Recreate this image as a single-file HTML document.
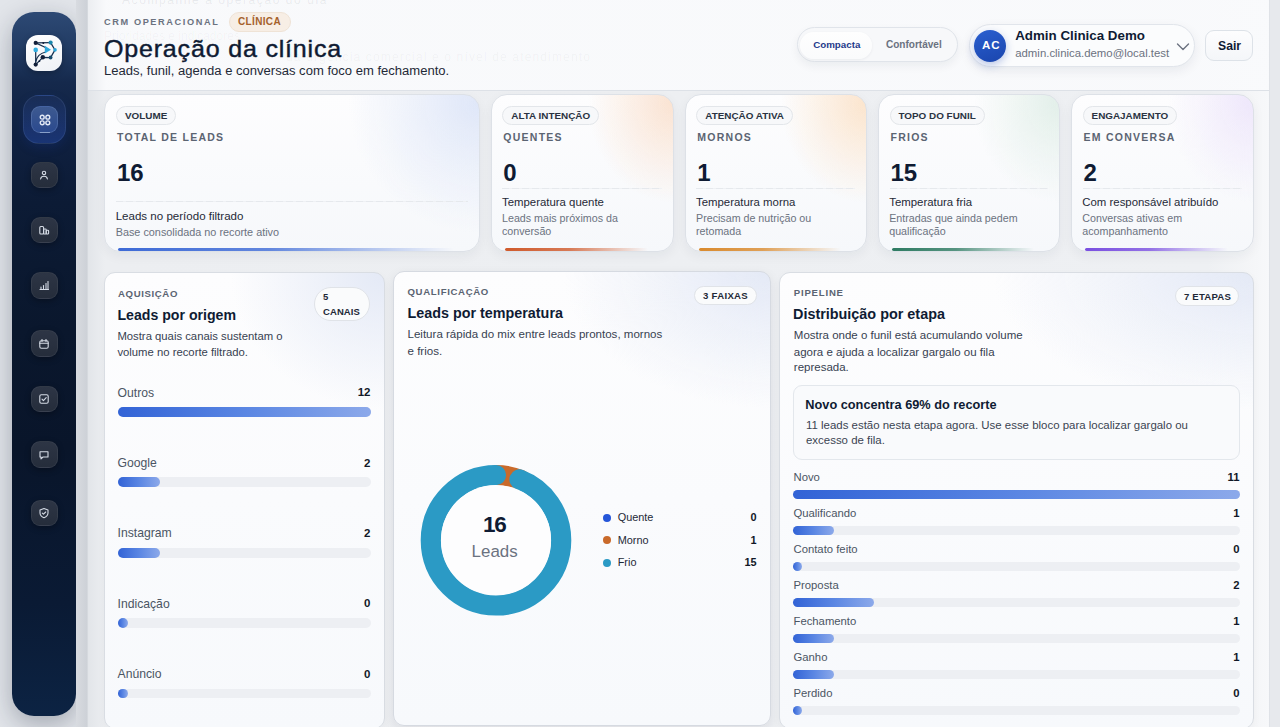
<!DOCTYPE html>
<html><head><meta charset="utf-8">
<style>
*{box-sizing:border-box;margin:0;padding:0}
html,body{width:1280px;height:727px;overflow:hidden}
body{font-family:"Liberation Sans",sans-serif;background:#e2e5ea;position:relative;color:#0f1b33}
.abs{position:absolute}
.t{position:absolute;white-space:nowrap;line-height:1}
</style></head><body>
<div class="abs" style="left:12.00px;top:12.00px;width:64.00px;height:704.00px;border-radius:22px;background:linear-gradient(180deg,#2d4974 0%,#223c64 5%,#15294c 10%,#0f2040 18%,#0c1b35 27%,#0a172d 45%,#09152a 62%,#0a1a34 84%,#0c2343 100%);box-shadow:0 8px 26px rgba(15,25,45,.30)"></div>
<div class="abs" style="left:26.00px;top:35.00px;width:36.00px;height:36.00px;border-radius:12px;background:linear-gradient(160deg,#ffffff,#eef1f6);box-shadow:0 2px 6px rgba(0,0,0,.25)"></div>
<svg class="abs" style="left:25px;top:34px" width="38" height="38" viewBox="0 0 38 38">
<g stroke="#17304f" stroke-width="1.25" fill="none" stroke-linecap="round">
<path d="M10.7 8.9 L25.6 8.6"/>
<path d="M10.7 8.9 L20.5 13.5"/>
<path d="M25.6 8.6 L30 15.9 L25.6 23.5 L17.8 23.3 L10.7 30.6"/>
<path d="M10.7 15.9 L10.7 30.6"/>
<path d="M11 27 Q12.5 20 20.5 18"/>
</g>
<path d="M19.8 11.8 L26 15.8 L19.8 19.6 Z" fill="#2ca6da"/>
<circle cx="10.7" cy="8.9" r="2.1" fill="#111f3a"/>
<circle cx="18.3" cy="8.9" r="1" fill="#111f3a"/>
<circle cx="25.6" cy="8.6" r="2.1" fill="#1b87ad"/>
<circle cx="10.7" cy="15.9" r="2.3" fill="#33aee0"/>
<circle cx="30" cy="15.9" r="1.8" fill="#2aa4d8"/>
<circle cx="17.8" cy="23.3" r="2.2" fill="#111f3a"/>
<circle cx="25.6" cy="23.5" r="1.9" fill="#15496b"/>
<circle cx="14.4" cy="27.2" r="0.9" fill="#111f3a"/>
<circle cx="10.7" cy="30.6" r="2.1" fill="#111f3a"/>
</svg>
<div class="abs" style="left:23.40px;top:95.00px;width:42.50px;height:48.60px;border-radius:16px;background:linear-gradient(180deg,rgba(30,50,95,.6),rgba(35,70,160,.55));border:1px solid rgba(150,175,225,.13);box-shadow:0 4px 10px rgba(20,50,140,.25)"></div>
<div class="abs" style="left:31.00px;top:106.00px;width:26.50px;height:26.50px;border-radius:9px;background:linear-gradient(180deg,#3d5990,#2b4a8e);border:1px solid rgba(160,185,230,.22)"></div>
<svg class="abs" style="left:39px;top:114px" width="12" height="12" viewBox="0 0 12 12" fill="none" stroke="#e3eaf7" stroke-width="1.4">
<circle cx="3.2" cy="3.2" r="1.95"/><circle cx="8.8" cy="3.2" r="1.95"/><circle cx="3.2" cy="8.8" r="1.95"/><circle cx="8.8" cy="8.8" r="1.95"/></svg>
<div class="abs" style="left:40.00px;top:131.50px;width:10.00px;height:1.00px;background:rgba(190,210,240,.5)"></div>
<div class="abs" style="left:31.00px;top:161.55px;width:26.50px;height:26.50px;border-radius:9px;background:linear-gradient(180deg,#2d3545,#252d3b);border:1px solid rgba(255,255,255,.06);box-shadow:0 2px 6px rgba(0,0,0,.3)"></div>
<svg class="abs" style="left:38.25px;top:168.80px" width="12" height="12" viewBox="0 0 12 12" fill="none" stroke="#d5dbe5" stroke-width="1.1" stroke-linecap="round" stroke-linejoin="round"><circle cx="6" cy="3.9" r="1.7"/><path d="M2.6 10 Q3 7.3 6 7.3 Q9 7.3 9.4 10"/></svg>
<div class="abs" style="left:31.00px;top:216.55px;width:26.50px;height:26.50px;border-radius:9px;background:linear-gradient(180deg,#2d3545,#252d3b);border:1px solid rgba(255,255,255,.06);box-shadow:0 2px 6px rgba(0,0,0,.3)"></div>
<svg class="abs" style="left:38.25px;top:223.80px" width="12" height="12" viewBox="0 0 12 12" fill="none" stroke="#d5dbe5" stroke-width="1.1" stroke-linecap="round" stroke-linejoin="round"><rect x="1.8" y="2.5" width="3.8" height="7.5" rx="1"/><rect x="5.6" y="5" width="2.6" height="5" rx=".8"/><rect x="8.2" y="6.2" width="2.4" height="3.8" rx=".8"/></svg>
<div class="abs" style="left:31.00px;top:272.15px;width:26.50px;height:26.50px;border-radius:9px;background:linear-gradient(180deg,#2d3545,#252d3b);border:1px solid rgba(255,255,255,.06);box-shadow:0 2px 6px rgba(0,0,0,.3)"></div>
<svg class="abs" style="left:38.25px;top:279.40px" width="12" height="12" viewBox="0 0 12 12" fill="none" stroke="#d5dbe5" stroke-width="1.1" stroke-linecap="round" stroke-linejoin="round"><path d="M2 10.5 H10.5"/><path d="M3 10 V8"/><path d="M5.5 10 V6.5"/><path d="M8 10 V4.5"/><path d="M10 10 V2.5"/></svg>
<div class="abs" style="left:31.00px;top:330.25px;width:26.50px;height:26.50px;border-radius:9px;background:linear-gradient(180deg,#2d3545,#252d3b);border:1px solid rgba(255,255,255,.06);box-shadow:0 2px 6px rgba(0,0,0,.3)"></div>
<svg class="abs" style="left:38.25px;top:337.50px" width="12" height="12" viewBox="0 0 12 12" fill="none" stroke="#d5dbe5" stroke-width="1.1" stroke-linecap="round" stroke-linejoin="round"><rect x="1.8" y="2.8" width="8.4" height="7.4" rx="1.5"/><path d="M1.8 5.3 H10.2"/><path d="M4 1.5 V3.5"/><path d="M8 1.5 V3.5"/></svg>
<div class="abs" style="left:31.00px;top:385.95px;width:26.50px;height:26.50px;border-radius:9px;background:linear-gradient(180deg,#2d3545,#252d3b);border:1px solid rgba(255,255,255,.06);box-shadow:0 2px 6px rgba(0,0,0,.3)"></div>
<svg class="abs" style="left:38.25px;top:393.20px" width="12" height="12" viewBox="0 0 12 12" fill="none" stroke="#d5dbe5" stroke-width="1.1" stroke-linecap="round" stroke-linejoin="round"><rect x="1.8" y="1.8" width="8.4" height="8.4" rx="1.5"/><path d="M4 6.2 L5.4 7.6 L8.2 4.6"/></svg>
<div class="abs" style="left:31.00px;top:441.25px;width:26.50px;height:26.50px;border-radius:9px;background:linear-gradient(180deg,#2d3545,#252d3b);border:1px solid rgba(255,255,255,.06);box-shadow:0 2px 6px rgba(0,0,0,.3)"></div>
<svg class="abs" style="left:38.25px;top:448.50px" width="12" height="12" viewBox="0 0 12 12" fill="none" stroke="#d5dbe5" stroke-width="1.1" stroke-linecap="round" stroke-linejoin="round"><path d="M2 2.8 H10 V8 H5 L3 9.8 V8 H2 Z"/></svg>
<div class="abs" style="left:31.00px;top:499.75px;width:26.50px;height:26.50px;border-radius:9px;background:linear-gradient(180deg,#2d3545,#252d3b);border:1px solid rgba(255,255,255,.06);box-shadow:0 2px 6px rgba(0,0,0,.3)"></div>
<svg class="abs" style="left:38.25px;top:507.00px" width="12" height="12" viewBox="0 0 12 12" fill="none" stroke="#d5dbe5" stroke-width="1.1" stroke-linecap="round" stroke-linejoin="round"><path d="M6 1.5 L10 3 V6 Q10 9 6 10.8 Q2 9 2 6 V3 Z"/><path d="M4.3 6.1 L5.5 7.2 L7.7 5"/></svg>
<div class="abs" style="left:76.00px;top:0.00px;width:11.00px;height:727.00px;background:linear-gradient(90deg,#d8dbe0,#cdd1d7)"></div>
<div class="abs" style="left:87.00px;top:0.00px;width:1182.00px;height:727.00px;background:linear-gradient(90deg,#e2e5e9 0,#eceef1 17px,#eef0f3 1120px,#f5f6f8 1166px,#f7f8fa 1182px);border-left:1px solid #d5d9de"></div>
<div class="abs" style="left:1269.00px;top:0.00px;width:11.00px;height:727.00px;background:#e7e9ed;border-left:1px solid #dfe2e7"></div>
<div class="abs" style="left:104.20px;top:94.00px;width:375.80px;height:158.30px;border-radius:16px;border:1px solid #dde1e7;background:radial-gradient(ellipse 130px 130px at 100% 5%,rgba(218,227,247,.85),rgba(255,255,255,0) 100%),linear-gradient(180deg,#fdfdfe,#f6f8fb);box-shadow:0 4px 12px rgba(20,30,50,.05);overflow:hidden"><div class="abs" style="left:13px;bottom:0;width:335.8px;height:3px;border-radius:2px;background:linear-gradient(90deg,#3d6ad6,#3d6ad6cc 45%,#3d6ad600)"></div></div>
<div class="abs" style="left:116.00px;top:106.00px;width:60.35px;height:18.50px;border-radius:10px;background:#f7f8fa;border:1px solid #e3e6ea"></div>
<div class="t" style="left:125.00px;top:110.92px;font-size:9.9px;color:#2a3342;font-weight:700;">VOLUME</div>
<div class="t" style="left:117.00px;top:132.41px;font-size:10.5px;color:#5b6472;font-weight:700;letter-spacing:1.250px;">TOTAL DE LEADS</div>
<div class="t" style="left:117.00px;top:160.68px;font-size:24px;color:#0f1b33;font-weight:700;">16</div>
<div class="abs" style="left:116.00px;top:201.00px;width:352.00px;height:1.00px;background:repeating-linear-gradient(90deg,#e6e9ed 0 7px,#eff1f4 7px 10px)"></div>
<div class="t" style="left:115.70px;top:210.62px;font-size:11.55px;color:#1f2937;">Leads no período filtrado</div>
<div class="t" style="left:115.70px;top:226.72px;font-size:10.85px;color:#6b7280;">Base consolidada no recorte ativo</div>
<div class="abs" style="left:490.50px;top:94.00px;width:183.50px;height:158.30px;border-radius:16px;border:1px solid #dde1e7;background:radial-gradient(ellipse 85px 100px at 100% 5%,rgba(250,224,205,.9),rgba(255,255,255,0) 100%),linear-gradient(180deg,#fdfdfe,#f6f8fb);box-shadow:0 4px 12px rgba(20,30,50,.05);overflow:hidden"><div class="abs" style="left:13px;bottom:0;width:143.5px;height:3px;border-radius:2px;background:linear-gradient(90deg,#cf5a2c,#cf5a2ccc 45%,#cf5a2c00)"></div></div>
<div class="abs" style="left:502.30px;top:106.00px;width:97.01px;height:18.50px;border-radius:10px;background:#f7f8fa;border:1px solid #e3e6ea"></div>
<div class="t" style="left:511.30px;top:110.92px;font-size:9.9px;color:#2a3342;font-weight:700;">ALTA INTENÇÃO</div>
<div class="t" style="left:503.30px;top:132.41px;font-size:10.5px;color:#5b6472;font-weight:700;letter-spacing:1.250px;">QUENTES</div>
<div class="t" style="left:503.30px;top:160.68px;font-size:24px;color:#0f1b33;font-weight:700;">0</div>
<div class="abs" style="left:502.30px;top:188.00px;width:159.70px;height:1.00px;background:repeating-linear-gradient(90deg,#e6e9ed 0 7px,#eff1f4 7px 10px)"></div>
<div class="t" style="left:502.00px;top:196.85px;font-size:11.4px;color:#1f2937;">Temperatura quente</div>
<div class="t" style="left:502.00px;top:212.94px;font-size:10.7px;color:#6b7280;">Leads mais próximos da</div>
<div class="t" style="left:502.00px;top:225.94px;font-size:10.7px;color:#6b7280;">conversão</div>
<div class="abs" style="left:684.50px;top:94.00px;width:182.50px;height:158.30px;border-radius:16px;border:1px solid #dde1e7;background:radial-gradient(ellipse 85px 100px at 100% 5%,rgba(251,226,200,.9),rgba(255,255,255,0) 100%),linear-gradient(180deg,#fdfdfe,#f6f8fb);box-shadow:0 4px 12px rgba(20,30,50,.05);overflow:hidden"><div class="abs" style="left:13px;bottom:0;width:142.5px;height:3px;border-radius:2px;background:linear-gradient(90deg,#d98a2e,#d98a2ecc 45%,#d98a2e00)"></div></div>
<div class="abs" style="left:696.30px;top:106.00px;width:96.83px;height:18.50px;border-radius:10px;background:#f7f8fa;border:1px solid #e3e6ea"></div>
<div class="t" style="left:705.30px;top:110.92px;font-size:9.9px;color:#2a3342;font-weight:700;">ATENÇÃO ATIVA</div>
<div class="t" style="left:697.30px;top:132.41px;font-size:10.5px;color:#5b6472;font-weight:700;letter-spacing:1.250px;">MORNOS</div>
<div class="t" style="left:697.30px;top:160.68px;font-size:24px;color:#0f1b33;font-weight:700;">1</div>
<div class="abs" style="left:696.30px;top:188.00px;width:158.70px;height:1.00px;background:repeating-linear-gradient(90deg,#e6e9ed 0 7px,#eff1f4 7px 10px)"></div>
<div class="t" style="left:696.00px;top:196.85px;font-size:11.4px;color:#1f2937;">Temperatura morna</div>
<div class="t" style="left:696.00px;top:212.94px;font-size:10.7px;color:#6b7280;">Precisam de nutrição ou</div>
<div class="t" style="left:696.00px;top:225.94px;font-size:10.7px;color:#6b7280;">retomada</div>
<div class="abs" style="left:877.70px;top:94.00px;width:182.40px;height:158.30px;border-radius:16px;border:1px solid #dde1e7;background:radial-gradient(ellipse 85px 100px at 100% 5%,rgba(220,236,228,.8),rgba(255,255,255,0) 100%),linear-gradient(180deg,#fdfdfe,#f6f8fb);box-shadow:0 4px 12px rgba(20,30,50,.05);overflow:hidden"><div class="abs" style="left:13px;bottom:0;width:142.4px;height:3px;border-radius:2px;background:linear-gradient(90deg,#2e7b62,#2e7b62cc 45%,#2e7b6200)"></div></div>
<div class="abs" style="left:889.50px;top:106.00px;width:95.37px;height:18.50px;border-radius:10px;background:#f7f8fa;border:1px solid #e3e6ea"></div>
<div class="t" style="left:898.50px;top:110.92px;font-size:9.9px;color:#2a3342;font-weight:700;">TOPO DO FUNIL</div>
<div class="t" style="left:890.50px;top:132.41px;font-size:10.5px;color:#5b6472;font-weight:700;letter-spacing:1.250px;">FRIOS</div>
<div class="t" style="left:890.50px;top:160.68px;font-size:24px;color:#0f1b33;font-weight:700;">15</div>
<div class="abs" style="left:889.50px;top:188.00px;width:158.60px;height:1.00px;background:repeating-linear-gradient(90deg,#e6e9ed 0 7px,#eff1f4 7px 10px)"></div>
<div class="t" style="left:889.20px;top:196.85px;font-size:11.4px;color:#1f2937;">Temperatura fria</div>
<div class="t" style="left:889.20px;top:212.94px;font-size:10.7px;color:#6b7280;">Entradas que ainda pedem</div>
<div class="t" style="left:889.20px;top:225.94px;font-size:10.7px;color:#6b7280;">qualificação</div>
<div class="abs" style="left:1070.80px;top:94.00px;width:183.60px;height:158.30px;border-radius:16px;border:1px solid #dde1e7;background:radial-gradient(ellipse 85px 100px at 100% 5%,rgba(235,226,250,.8),rgba(255,255,255,0) 100%),linear-gradient(180deg,#fdfdfe,#f6f8fb);box-shadow:0 4px 12px rgba(20,30,50,.05);overflow:hidden"><div class="abs" style="left:13px;bottom:0;width:143.6px;height:3px;border-radius:2px;background:linear-gradient(90deg,#7a4fe0,#7a4fe0cc 45%,#7a4fe000)"></div></div>
<div class="abs" style="left:1082.60px;top:106.00px;width:94.83px;height:18.50px;border-radius:10px;background:#f7f8fa;border:1px solid #e3e6ea"></div>
<div class="t" style="left:1091.60px;top:110.92px;font-size:9.9px;color:#2a3342;font-weight:700;">ENGAJAMENTO</div>
<div class="t" style="left:1083.60px;top:132.41px;font-size:10.5px;color:#5b6472;font-weight:700;letter-spacing:1.250px;">EM CONVERSA</div>
<div class="t" style="left:1083.60px;top:160.68px;font-size:24px;color:#0f1b33;font-weight:700;">2</div>
<div class="abs" style="left:1082.60px;top:188.00px;width:159.80px;height:1.00px;background:repeating-linear-gradient(90deg,#e6e9ed 0 7px,#eff1f4 7px 10px)"></div>
<div class="t" style="left:1082.30px;top:196.85px;font-size:11.4px;color:#1f2937;">Com responsável atribuído</div>
<div class="t" style="left:1082.30px;top:212.94px;font-size:10.7px;color:#6b7280;">Conversas ativas em</div>
<div class="t" style="left:1082.30px;top:225.94px;font-size:10.7px;color:#6b7280;">acompanhamento</div>
<div class="abs" style="left:104.20px;top:272.00px;width:280.80px;height:457.00px;border-radius:11px;border:1px solid #d9dde3;background:radial-gradient(ellipse 55% 30% at 100% 0%,rgba(225,231,245,.9),rgba(255,255,255,0)),linear-gradient(180deg,#fdfdfe 0%,#f7f9fc 100%);box-shadow:0 3px 8px rgba(20,30,50,.035);"></div>
<div class="abs" style="left:393.00px;top:270.50px;width:378.00px;height:455.50px;border-radius:11px;border:1px solid #d9dde3;background:radial-gradient(ellipse 55% 30% at 100% 0%,rgba(225,231,245,.9),rgba(255,255,255,0)),linear-gradient(180deg,#fdfdfe 0%,#f7f9fc 100%);box-shadow:0 3px 8px rgba(20,30,50,.035);box-shadow:0 4px 12px rgba(20,30,50,.08);border-color:#d6dae1"></div>
<div class="abs" style="left:779.20px;top:272.00px;width:475.20px;height:457.00px;border-radius:11px;border:1px solid #d9dde3;background:radial-gradient(ellipse 55% 30% at 100% 0%,rgba(225,231,245,.9),rgba(255,255,255,0)),linear-gradient(180deg,#fdfdfe 0%,#f7f9fc 100%);box-shadow:0 3px 8px rgba(20,30,50,.035);"></div>
<div class="t" style="left:118.00px;top:288.62px;font-size:9.6px;color:#5b6472;font-weight:700;letter-spacing:0.622px;">AQUISIÇÃO</div>
<div class="t" style="left:117.40px;top:307.52px;font-size:14.15px;color:#0f1b33;font-weight:700;">Leads por origem</div>
<div class="t" style="left:117.40px;top:331.23px;font-size:11.3px;color:#374151;">Mostra quais canais sustentam o</div>
<div class="t" style="left:117.40px;top:347.18px;font-size:11.3px;color:#374151;">volume no recorte filtrado.</div>
<div class="abs" style="left:313.75px;top:287.00px;width:56.25px;height:34.00px;border-radius:17px;background:#fafbfc;border:1px solid #e0e3e8"></div>
<div class="t" style="left:323.00px;top:291.96px;font-size:9.5px;color:#1f2937;font-weight:700;">5</div>
<div class="t" style="left:323.00px;top:306.96px;font-size:9.5px;color:#1f2937;font-weight:700;letter-spacing:0.097px;">CANAIS</div>
<div class="t" style="left:117.50px;top:386.67px;font-size:12.2px;color:#4b5563;">Outros</div>
<div class="t" style="right:909.50px;top:387.27px;font-size:11.5px;color:#111827;font-weight:700;">12</div>
<div class="abs" style="left:118.00px;top:407.00px;width:252.80px;height:9.80px;border-radius:5px;background:#edeff3"></div>
<div class="abs" style="left:118.00px;top:407.00px;width:252.80px;height:9.80px;border-radius:5px;background:linear-gradient(90deg,#3263d6,#5a86e3 50%,#8ca9ea)"></div>
<div class="t" style="left:117.50px;top:457.07px;font-size:12.2px;color:#4b5563;">Google</div>
<div class="t" style="right:909.50px;top:457.67px;font-size:11.5px;color:#111827;font-weight:700;">2</div>
<div class="abs" style="left:118.00px;top:477.40px;width:252.80px;height:9.80px;border-radius:5px;background:#edeff3"></div>
<div class="abs" style="left:118.00px;top:477.40px;width:42.13px;height:9.80px;border-radius:5px;background:linear-gradient(90deg,#3263d6,#5a86e3 50%,#8ca9ea)"></div>
<div class="t" style="left:117.50px;top:527.47px;font-size:12.2px;color:#4b5563;">Instagram</div>
<div class="t" style="right:909.50px;top:528.07px;font-size:11.5px;color:#111827;font-weight:700;">2</div>
<div class="abs" style="left:118.00px;top:547.80px;width:252.80px;height:9.80px;border-radius:5px;background:#edeff3"></div>
<div class="abs" style="left:118.00px;top:547.80px;width:42.13px;height:9.80px;border-radius:5px;background:linear-gradient(90deg,#3263d6,#5a86e3 50%,#8ca9ea)"></div>
<div class="t" style="left:117.50px;top:597.87px;font-size:12.2px;color:#4b5563;">Indicação</div>
<div class="t" style="right:909.50px;top:598.47px;font-size:11.5px;color:#111827;font-weight:700;">0</div>
<div class="abs" style="left:118.00px;top:618.20px;width:252.80px;height:9.80px;border-radius:5px;background:#edeff3"></div>
<div class="abs" style="left:118.00px;top:618.20px;width:10.00px;height:9.80px;border-radius:5px;background:linear-gradient(90deg,#3263d6,#5a86e3 50%,#8ca9ea)"></div>
<div class="t" style="left:117.50px;top:668.27px;font-size:12.2px;color:#4b5563;">Anúncio</div>
<div class="t" style="right:909.50px;top:668.87px;font-size:11.5px;color:#111827;font-weight:700;">0</div>
<div class="abs" style="left:118.00px;top:688.60px;width:252.80px;height:9.80px;border-radius:5px;background:#edeff3"></div>
<div class="abs" style="left:118.00px;top:688.60px;width:10.00px;height:9.80px;border-radius:5px;background:linear-gradient(90deg,#3263d6,#5a86e3 50%,#8ca9ea)"></div>
<div class="t" style="left:407.50px;top:286.87px;font-size:9.6px;color:#5b6472;font-weight:700;letter-spacing:0.659px;">QUALIFICAÇÃO</div>
<div class="t" style="left:407.50px;top:306.25px;font-size:14.35px;color:#0f1b33;font-weight:700;">Leads por temperatura</div>
<div class="t" style="left:407.50px;top:328.97px;font-size:11.55px;color:#374151;">Leitura rápida do mix entre leads prontos, mornos</div>
<div class="t" style="left:407.50px;top:345.52px;font-size:11.55px;color:#374151;">e frios.</div>
<div class="abs" style="left:693.75px;top:285.60px;width:63.25px;height:19.70px;border-radius:10px;background:#fafbfc;border:1px solid #e0e3e8"></div>
<div class="t" style="left:703.00px;top:290.87px;font-size:9.6px;color:#1f2937;font-weight:700;letter-spacing:0.290px;">3 FAIXAS</div>
<svg class="abs" style="left:0;top:0" width="1280" height="727"><circle cx="496" cy="540.3" r="65.2" fill="none" stroke="#c96a2b" stroke-width="20.2" stroke-linecap="round" stroke-dasharray="25.604 409.664" stroke-dashoffset="-0.000" transform="rotate(-90 496 540.3)"/><circle cx="496" cy="540.3" r="65.2" fill="none" stroke="#2b9ac5" stroke-width="20.2" stroke-linecap="round" stroke-dasharray="385.698 409.664" stroke-dashoffset="-23.965" transform="rotate(-90 496 540.3)"/></svg>
<div class="abs" style="left:441.00px;top:485.30px;width:110.00px;height:110.00px;border-radius:50%;background:#fdfdfe"></div>
<div class="t" style="left:483.00px;top:514.45px;font-size:22.5px;color:#0f1b33;font-weight:700;letter-spacing:-1.300px;">16</div>
<div class="t" style="left:471.60px;top:543.69px;font-size:16.9px;color:#6b7280;">Leads</div>
<div class="abs" style="left:602.70px;top:513.60px;width:8.00px;height:8.00px;border-radius:50%;background:#2556d9"></div>
<div class="t" style="left:617.70px;top:512.17px;font-size:10.9px;color:#1f2937;">Quente</div>
<div class="t" style="right:523.40px;top:512.17px;font-size:10.9px;color:#111827;font-weight:700;">0</div>
<div class="abs" style="left:602.70px;top:536.10px;width:8.00px;height:8.00px;border-radius:50%;background:#c96a2b"></div>
<div class="t" style="left:617.70px;top:534.67px;font-size:10.9px;color:#1f2937;">Morno</div>
<div class="t" style="right:523.40px;top:534.67px;font-size:10.9px;color:#111827;font-weight:700;">1</div>
<div class="abs" style="left:602.70px;top:558.60px;width:8.00px;height:8.00px;border-radius:50%;background:#2b9ac5"></div>
<div class="t" style="left:617.70px;top:557.17px;font-size:10.9px;color:#1f2937;">Frio</div>
<div class="t" style="right:523.40px;top:557.17px;font-size:10.9px;color:#111827;font-weight:700;">15</div>
<div class="t" style="left:793.80px;top:288.37px;font-size:9.6px;color:#5b6472;font-weight:700;letter-spacing:0.782px;">PIPELINE</div>
<div class="t" style="left:793.00px;top:307.21px;font-size:14.4px;color:#0f1b33;font-weight:700;">Distribuição por etapa</div>
<div class="t" style="left:793.80px;top:330.27px;font-size:11.5px;color:#374151;">Mostra onde o funil está acumulando volume</div>
<div class="t" style="left:793.80px;top:346.77px;font-size:11.5px;color:#374151;">agora e ajuda a localizar gargalo ou fila</div>
<div class="t" style="left:793.80px;top:362.17px;font-size:11.5px;color:#374151;">represada.</div>
<div class="abs" style="left:1174.50px;top:286.40px;width:64.70px;height:20.10px;border-radius:10px;background:#fafbfc;border:1px solid #e0e3e8"></div>
<div class="t" style="left:1184.00px;top:292.37px;font-size:9.6px;color:#1f2937;font-weight:700;letter-spacing:0.185px;">7 ETAPAS</div>
<div class="abs" style="left:793.00px;top:385.00px;width:446.50px;height:74.50px;border-radius:9px;background:#f9fafc;border:1px solid #e3e7ec"></div>
<div class="t" style="left:805.30px;top:398.71px;font-size:12.75px;color:#0f1b33;font-weight:700;">Novo concentra 69% do recorte</div>
<div class="t" style="left:806.00px;top:419.61px;font-size:11.45px;color:#3b4452;">11 leads estão nesta etapa agora. Use esse bloco para localizar gargalo ou</div>
<div class="t" style="left:806.00px;top:434.81px;font-size:11.45px;color:#3b4452;">excesso de fila.</div>
<div class="t" style="left:793.50px;top:472.23px;font-size:11.3px;color:#4b5563;">Novo</div>
<div class="t" style="right:40.50px;top:472.23px;font-size:11.3px;color:#111827;font-weight:700;">11</div>
<div class="abs" style="left:793.00px;top:490.40px;width:446.50px;height:8.30px;border-radius:5px;background:#edeff3"></div>
<div class="abs" style="left:793.00px;top:490.40px;width:446.50px;height:8.30px;border-radius:5px;background:linear-gradient(90deg,#3263d6,#5a86e3 50%,#8ca9ea)"></div>
<div class="t" style="left:793.50px;top:508.23px;font-size:11.3px;color:#4b5563;">Qualificando</div>
<div class="t" style="right:40.50px;top:508.23px;font-size:11.3px;color:#111827;font-weight:700;">1</div>
<div class="abs" style="left:793.00px;top:526.40px;width:446.50px;height:8.30px;border-radius:5px;background:#edeff3"></div>
<div class="abs" style="left:793.00px;top:526.40px;width:40.59px;height:8.30px;border-radius:5px;background:linear-gradient(90deg,#3263d6,#5a86e3 50%,#8ca9ea)"></div>
<div class="t" style="left:793.50px;top:544.23px;font-size:11.3px;color:#4b5563;">Contato feito</div>
<div class="t" style="right:40.50px;top:544.23px;font-size:11.3px;color:#111827;font-weight:700;">0</div>
<div class="abs" style="left:793.00px;top:562.40px;width:446.50px;height:8.30px;border-radius:5px;background:#edeff3"></div>
<div class="abs" style="left:793.00px;top:562.40px;width:8.50px;height:8.30px;border-radius:5px;background:linear-gradient(90deg,#3263d6,#5a86e3 50%,#8ca9ea)"></div>
<div class="t" style="left:793.50px;top:580.23px;font-size:11.3px;color:#4b5563;">Proposta</div>
<div class="t" style="right:40.50px;top:580.23px;font-size:11.3px;color:#111827;font-weight:700;">2</div>
<div class="abs" style="left:793.00px;top:598.40px;width:446.50px;height:8.30px;border-radius:5px;background:#edeff3"></div>
<div class="abs" style="left:793.00px;top:598.40px;width:81.18px;height:8.30px;border-radius:5px;background:linear-gradient(90deg,#3263d6,#5a86e3 50%,#8ca9ea)"></div>
<div class="t" style="left:793.50px;top:616.23px;font-size:11.3px;color:#4b5563;">Fechamento</div>
<div class="t" style="right:40.50px;top:616.23px;font-size:11.3px;color:#111827;font-weight:700;">1</div>
<div class="abs" style="left:793.00px;top:634.40px;width:446.50px;height:8.30px;border-radius:5px;background:#edeff3"></div>
<div class="abs" style="left:793.00px;top:634.40px;width:40.59px;height:8.30px;border-radius:5px;background:linear-gradient(90deg,#3263d6,#5a86e3 50%,#8ca9ea)"></div>
<div class="t" style="left:793.50px;top:652.23px;font-size:11.3px;color:#4b5563;">Ganho</div>
<div class="t" style="right:40.50px;top:652.23px;font-size:11.3px;color:#111827;font-weight:700;">1</div>
<div class="abs" style="left:793.00px;top:670.40px;width:446.50px;height:8.30px;border-radius:5px;background:#edeff3"></div>
<div class="abs" style="left:793.00px;top:670.40px;width:40.59px;height:8.30px;border-radius:5px;background:linear-gradient(90deg,#3263d6,#5a86e3 50%,#8ca9ea)"></div>
<div class="t" style="left:793.50px;top:688.23px;font-size:11.3px;color:#4b5563;">Perdido</div>
<div class="t" style="right:40.50px;top:688.23px;font-size:11.3px;color:#111827;font-weight:700;">0</div>
<div class="abs" style="left:793.00px;top:706.40px;width:446.50px;height:8.30px;border-radius:5px;background:#edeff3"></div>
<div class="abs" style="left:793.00px;top:706.40px;width:8.50px;height:8.30px;border-radius:5px;background:linear-gradient(90deg,#3263d6,#5a86e3 50%,#8ca9ea)"></div>
<div class="abs" style="left:88.00px;top:-1.00px;width:1181.00px;height:92.00px;background:linear-gradient(90deg,rgba(236,238,241,.97),rgba(249,250,252,.95) 18px);border-bottom:1px solid #dde1e7"></div>
<div class="t" style="left:122.00px;top:-6.16px;font-size:12px;color:rgba(60,70,90,.09);letter-spacing:1.576px;">Acompanhe a operação do dia</div>
<div class="t" style="left:286.00px;top:50.84px;font-size:12px;color:rgba(60,70,90,.05);letter-spacing:1.149px;">da urgência comercial e o nível de atendimento</div>
<div class="t" style="left:104.00px;top:29.84px;font-size:12px;color:rgba(60,70,90,.04);letter-spacing:0.024px;">Prioridades e indicadores</div>
<div class="t" style="left:104.00px;top:17.81px;font-size:9.2px;color:#6b7280;font-weight:700;letter-spacing:1.601px;">CRM OPERACIONAL</div>
<div class="abs" style="left:229.00px;top:12.00px;width:61.50px;height:20.00px;border-radius:10px;background:#f7eee5;border:1px solid #efe3d6"></div>
<div class="t" style="left:238.00px;top:16.73px;font-size:10px;color:#a5612b;font-weight:700;letter-spacing:0.350px;">CLÍNICA</div>
<div class="t" style="left:104.00px;top:35.64px;font-size:25px;color:#0f1b33;letter-spacing:0.824px;-webkit-text-stroke:0.45px #0f1b33;transform:scaleY(.95);transform-origin:0 21.16px;">Operação da clínica</div>
<div class="t" style="left:104.00px;top:64.15px;font-size:13.05px;color:#1f2937;">Leads, funil, agenda e conversas com foco em fechamento.</div>
<div class="abs" style="left:797.20px;top:27.40px;width:160.40px;height:34.90px;border-radius:18px;background:#f7f8fa;border:1px solid #e0e4ea;box-shadow:0 4px 10px rgba(20,30,50,.06)"></div>
<div class="abs" style="left:800.00px;top:31.50px;width:72.00px;height:27.00px;border-radius:14px;background:linear-gradient(180deg,#fefefe,#fafbfc);box-shadow:0 1px 3px rgba(20,30,50,.06)"></div>
<div class="t" style="left:813.20px;top:39.75px;font-size:9.75px;color:#1e3a8a;font-weight:700;">Compacta</div>
<div class="t" style="left:885.90px;top:40.29px;font-size:10.05px;color:#6b7280;font-weight:700;">Confortável</div>
<div class="abs" style="left:968.50px;top:23.50px;width:226.00px;height:43.00px;border-radius:22px;background:#fbfcfd;border:1px solid #e1e5eb;box-shadow:0 4px 12px rgba(20,30,50,.07)"></div>
<div class="abs" style="left:974.00px;top:29.50px;width:32.00px;height:32.00px;border-radius:50%;background:linear-gradient(160deg,#2a5fd0,#1a45ad);box-shadow:0 3px 8px rgba(30,70,180,.3)"></div>
<div class="t" style="left:982.00px;top:40.27px;font-size:11.5px;color:#ffffff;font-weight:700;letter-spacing:1.000px;">AC</div>
<div class="t" style="left:1015.20px;top:29.10px;font-size:13.35px;color:#0f1b33;font-weight:700;">Admin Clinica Demo</div>
<div class="t" style="left:1015.20px;top:47.85px;font-size:11.4px;color:#6b7280;">admin.clinica.demo@local.test</div>
<svg class="abs" style="left:1176px;top:42px" width="14" height="10" viewBox="0 0 14 10" fill="none" stroke="#6b7280" stroke-width="1.4" stroke-linecap="round" stroke-linejoin="round"><path d="M1.5 2 L7 7.5 L12.5 2"/></svg>
<div class="abs" style="left:1205.30px;top:29.50px;width:48.20px;height:31.00px;border-radius:9px;background:linear-gradient(180deg,#fdfdfe,#f4f6f9);border:1px solid #dde2e8"></div>
<div class="t" style="left:1218.00px;top:39.67px;font-size:12.2px;color:#0f1b33;font-weight:700;">Sair</div>
</body></html>
